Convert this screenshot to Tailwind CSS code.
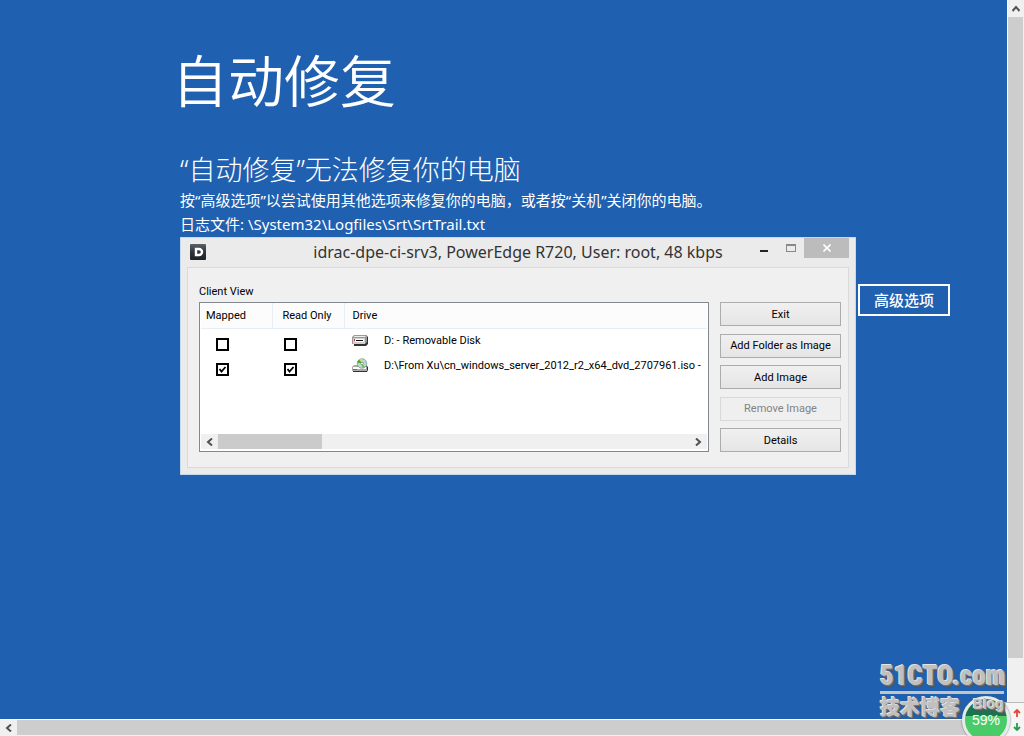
<!DOCTYPE html>
<html lang="zh-CN">
<head>
  <meta charset="UTF-8" />
  <meta name="viewport" content="width=device-width, initial-scale=1.0" />
  <title>自动修复</title>
  <script src="https://cdn.jsdelivr.net/npm/@tailwindcss/browser@4"></script>
</head>
<body class="h-screen overflow-hidden bg-[#2060b0] font-['Noto_Sans','Noto_Sans_CJK_SC',sans-serif] text-white">

<div class="relative flex h-full flex-col">
  <div class="flex min-h-0 flex-1">

    <!-- recovery screen -->
    <main class="min-w-0 flex-1 pt-[46px] pl-[180px]">
      <h1 class="-ml-2 text-[56px] leading-[68px] font-[350]">自动修复</h1>
      <h2 class="mt-[38px] text-[27px] leading-9 font-light">“自动修复”无法修复你的电脑</h2>
      <p class="text-[15px] leading-6">按“高级选项”以尝试使用其他选项来修复你的电脑，或者按“关机”关闭你的电脑。</p>
      <p class="text-[15px] leading-6">日志文件: \System32\Logfiles\Srt\SrtTrail.txt</p>

      <div class="mt-px flex items-start gap-[2px]">
        <!-- virtual media window -->
        <section class="w-[676px] shrink-0 border border-[#c3d9ee] bg-[#ebebeb] px-[6px] pb-[6px] font-[Roboto,sans-serif] text-[11px] text-black">
          <header class="relative flex h-[29px] justify-center">
            <svg class="absolute top-[6px] left-[3px]" width="16" height="16" viewBox="0 0 16 16">
              <defs><linearGradient id="dlogo" x2="0" y2="1"><stop stop-color="#5a6068" /><stop offset=".5" stop-color="#30363d" /><stop offset="1" stop-color="#1c2126" /></linearGradient></defs>
              <rect width="16" height="16" rx="1" fill="url(#dlogo)" />
              <path d="M6 5h3a3 3 0 0 1 0 6H6z" fill="none" stroke="#fff" stroke-width="2.4" />
            </svg>
            <h3 class="font-['Noto_Sans',sans-serif] text-base leading-[29px] text-[#333]">idrac-dpe-ci-srv3, PowerEdge R720, User: root, 48 kbps</h3>
            <div class="absolute top-0 right-0 flex h-5">
              <button class="flex w-7 justify-center pt-3" aria-label="Minimize"><span class="h-[2px] w-2 bg-[#222]"></span></button>
              <button class="flex w-[26px] justify-center pt-[6px]" aria-label="Maximize"><span class="h-2 w-[10px] border border-t-2 border-[#888]"></span></button>
              <button class="flex w-[45px] items-center justify-center bg-[#bcbcbc]" aria-label="Close">
                <svg width="8" height="8" viewBox="0 0 8 8" stroke="#fff" stroke-width="1.6"><path d="M.5.5l7 7M7.5.5l-7 7" /></svg>
              </button>
            </div>
          </header>

          <div class="border border-[#dadada] bg-[#f0f0f0] px-[7px] pb-[15px] pl-[11px]">
            <div class="pt-4 pb-[2px] leading-4" id="clientView">Client View</div>
            <div class="flex gap-[11px]">
              <div class="flex h-[150px] min-w-0 flex-1 flex-col border border-[#828790] bg-white px-px pb-[2px]">
                <div class="min-h-0 flex-1 overflow-hidden">
                  <table class="w-full table-fixed" aria-labelledby="clientView">
                    <thead>
                      <tr class="h-[25px] border-b border-[#e6eef8] bg-[#fcfcfc] text-left">
                        <th class="w-[71px] border-r border-[#e6eef8] pt-[2px] pl-[5px] font-normal">Mapped</th>
                        <th class="w-[72px] border-r border-[#e6eef8] pt-[2px] pl-[10px] font-normal">Read Only</th>
                        <th class="pt-[2px] pl-2 font-normal">Drive</th>
                      </tr>
                    </thead>
                    <tbody>
                      <tr class="h-[25px]">
                        <td class="pt-2 pl-[15px]"><input type="checkbox" aria-label="Mapped D:" class="block size-[13px] appearance-none border-2 border-black bg-white" /></td>
                        <td class="pt-2 pl-3"><input type="checkbox" aria-label="Read only D:" class="block size-[13px] appearance-none border-2 border-black bg-white" /></td>
                        <td class="pt-px pl-2">
                          <div class="flex items-center gap-4 whitespace-nowrap">
                            <svg class="shrink-0" width="16" height="16" viewBox="0 0 16 16">
                              <path d="M2 3h13l1 1v7l-2 2H2z" fill="#333" />
                              <path d="M0 4l2-2h13v7l-2 2H0z" fill="#999" />
                              <path d="M1 4l2-1h11l-1 1z" fill="#eee" />
                              <path d="M1 5h12v6H1z" fill="#d0d0d0" />
                              <path d="M3 6h9v3H3z" fill="#fff" /><path d="M4 7h7v1H4z" fill="#111" />
                              <path d="M2 6h1v2H2z" fill="#c33" />
                            </svg>
                            <span>D: - Removable Disk</span>
                          </div>
                        </td>
                      </tr>
                      <tr class="h-[25px]">
                        <td class="pt-2 pl-[15px]"><input type="checkbox" checked aria-label="Mapped ISO" class="block size-[13px] appearance-none border-2 border-black bg-white" /><svg class="pointer-events-none absolute -mt-[13px]" width="13" height="13" fill="none" stroke="#000" stroke-width="1.8"><path d="M3.5 6l2 2.5L9.5 4" /></svg></td>
                        <td class="pt-2 pl-3"><input type="checkbox" checked aria-label="Read only ISO" class="block size-[13px] appearance-none border-2 border-black bg-white" /><svg class="pointer-events-none absolute -mt-[13px]" width="13" height="13" fill="none" stroke="#000" stroke-width="1.8"><path d="M3.5 6l2 2.5L9.5 4" /></svg></td>
                        <td class="pt-px pl-2">
                          <div class="flex items-center gap-4 whitespace-nowrap">
                            <svg class="shrink-0" width="16" height="16" viewBox="0 0 16 16">
                              <path d="M1 9l2-2h11l2 2v3l-1 2H1z" fill="#333" />
                              <path d="M0 9l2-2h11l2 2v4H0z" fill="#aaa" />
                              <path d="M1 9h13v2H1z" fill="#fff" /><path d="M1 11h4v1H1z" fill="#2a2" />
                              <circle cx="10" cy="5.5" r="4.8" fill="#b9dfbd" stroke="#777" stroke-width=".6" />
                              <path d="M10 5.5L7 1.5l3-1z" fill="#e8d830" /><path d="M10 5.5l-5-1 2-3z" fill="#2fae4c" />
                              <path d="M10 5.5l3 3.5-3 1z" fill="#6cc070" /><path d="M10 5.5l4-3 1 2z" fill="#a6cbe8" />
                              <circle cx="10" cy="5.5" r="1.3" fill="#fff" stroke="#666" stroke-width=".6" />
                            </svg>
                            <span>D:\From Xu\cn_windows_server_2012_r2_x64_dvd_2707961.iso -</span>
                          </div>
                        </td>
                      </tr>
                    </tbody>
                  </table>
                </div>
                <div class="flex h-[15px] bg-[#f0f0f0]">
                  <button class="flex w-[17px] items-center justify-center" aria-label="Scroll left"><svg width="7" height="8" viewBox="0 0 7 8" fill="none" stroke="#505050" stroke-width="2"><path d="M6 .5L2 4l4 3.5" /></svg></button>
                  <div class="flex-1"><div class="h-full w-[104px] bg-[#cbcbcb]"></div></div>
                  <button class="flex w-[17px] items-center justify-center" aria-label="Scroll right"><svg width="7" height="8" viewBox="0 0 7 8" fill="none" stroke="#505050" stroke-width="2"><path d="M1 .5L5 4 1 7.5" /></svg></button>
                </div>
              </div>

              <div class="flex w-[121px] flex-col justify-between">
                <button class="h-6 border border-[#acacac] bg-linear-to-b from-[#f0f0f0] to-[#e5e5e5] pt-[2px]">Exit</button>
                <button class="h-6 border border-[#acacac] bg-linear-to-b from-[#f0f0f0] to-[#e5e5e5] pt-[2px]">Add Folder as Image</button>
                <button class="h-6 border border-[#acacac] bg-linear-to-b from-[#f0f0f0] to-[#e5e5e5] pt-[2px]">Add Image</button>
                <button class="h-6 border border-[#d9d9d9] bg-[#efefef] pt-[2px] text-[#838383]" disabled>Remove Image</button>
                <button class="h-6 border border-[#acacac] bg-linear-to-b from-[#f0f0f0] to-[#e5e5e5] pt-[2px]">Details</button>
              </div>
            </div>
          </div>
        </section>

        <button class="mt-[47px] h-8 w-[92px] border-2 border-white text-[15px] font-medium">高级选项</button>
      </div>
    </main>

    <!-- vertical scrollbar -->
    <div class="flex w-[17px] shrink-0 flex-col border-l border-white bg-[#f0f0f0]">
      <button class="flex h-[17px] items-center justify-center" aria-label="Scroll up"><svg width="8" height="7" viewBox="0 0 8 7" fill="none" stroke="#505050" stroke-width="2"><path d="M.5 6L4 2l3.5 4" /></svg></button>
      <div class="mr-px h-[641px] bg-[#cdcdcd]"></div>
    </div>
  </div>

  <!-- horizontal scrollbar -->
  <div class="flex h-[17px] shrink-0 border-t border-white bg-[#f0f0f0]">
    <button class="flex w-[17px] items-center justify-center" aria-label="Scroll left"><svg width="7" height="8" viewBox="0 0 7 8" fill="none" stroke="#505050" stroke-width="2"><path d="M6 .5L2 4l4 3.5" /></svg></button>
    <div class="mb-px flex-1 bg-[#cdcdcd]"></div>
  </div>

  <!-- memory ball -->
  <div class="absolute right-0 bottom-0 flex h-[34px] w-9 flex-col items-end justify-center gap-[6px] border-t border-[#bbb] bg-[#f5f5f5] pr-[3px]">
    <svg width="8" height="8" viewBox="0 0 8 8" fill="none" stroke="#e04a35" stroke-width="1.8"><path d="M4 8V1M1 4l3-3 3 3" /></svg>
    <svg width="8" height="8" viewBox="0 0 8 8" fill="none" stroke="#2a9a50" stroke-width="1.8"><path d="M4 0v7M1 4l3 3 3-3" /></svg>
  </div>
  <div class="absolute right-[14px] -bottom-2 flex size-12 items-center justify-center rounded-full border-[3px] border-[#e4ebe8] bg-linear-to-b from-[#1c7350] from-40% to-[#49cc68] to-40% font-['Liberation_Sans',sans-serif] text-sm shadow-[0_0_2px_#555]">59%</div>

  <!-- site watermark -->
  <div class="absolute right-5 bottom-[14px] w-[124px] text-[#c0c0c0] [text-shadow:-1px_-1px_0_#e4e4e4,1px_1px_0_#777,2px_2px_1px_#555]">
    <div class="border-b-[3px] border-[#c4c4c4] font-['Roboto_Condensed',Roboto,sans-serif] text-[27px] leading-[30px] font-black whitespace-nowrap">51CTO.com</div>
    <div class="flex h-7 items-start justify-between">
      <span class="text-xl leading-7 font-black">技术博客</span>
      <span class="font-['Liberation_Sans',sans-serif] text-sm leading-5 font-bold">Blog</span>
    </div>
  </div>
</div>

</body>
</html>
